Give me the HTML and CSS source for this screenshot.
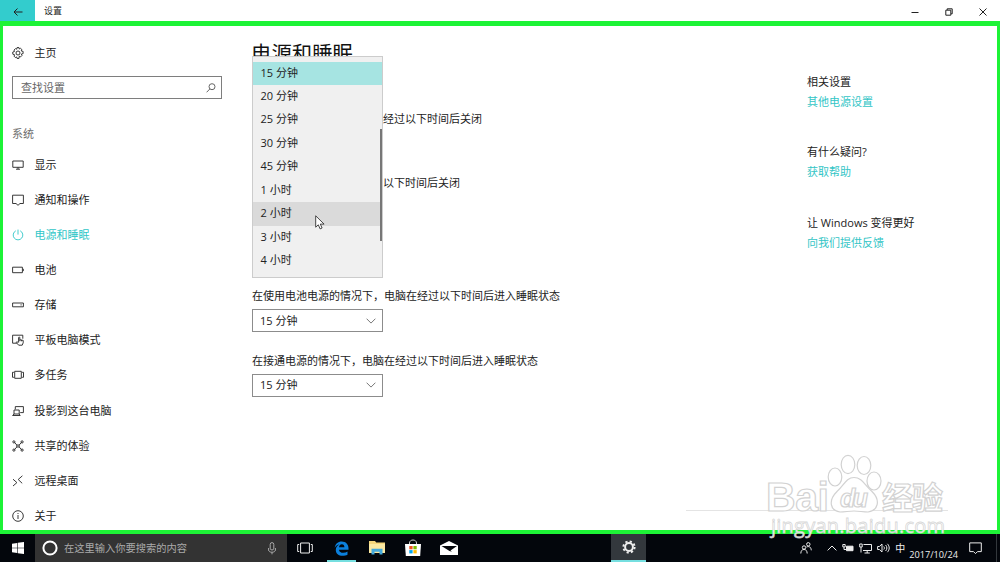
FILE: index.html
```html
<!DOCTYPE html>
<html lang="zh-CN">
<head>
    <meta charset="UTF-8">
    <meta name="viewport" content="width=device-width, initial-scale=1.0">
    <title>设置</title>
    <link rel="stylesheet" href="styles.css">
</head>
<body>
    <header class="titlebar">
        <div class="back">
            <svg width="10" height="10" viewBox="0 0 10 10"><path d="M9.5 5H1M4.5 1.5L1 5l3.500 3.500"/></svg>
        </div>
        <span class="window-name">设置</span>
        <div class="window-buttons">
            <svg width="8" height="8" viewBox="0 0 8 8"><path d="M.5 4.5h7"/></svg>
            <svg width="8" height="8" viewBox="0 0 8 8"><path d="M.8 2.2h5v5h-5zM2.2 2V.8h5v5H6"/></svg>
            <svg width="8" height="8" viewBox="0 0 8 8"><path d="M.5.5l7 7M7.5.5l-7 7"/></svg>
        </div>
    </header>

    <div class="window">
        <nav class="sidebar">
            <a class="home">
                <svg class="icon" viewBox="0 0 12 12"><path d="M5 .6h2l.3 1.4 1.2-.7 1.4 1.3-.7 1.3 1.9.5v2.200l-1.800.5.7 1.300-1.400 1.500-1.300-.7L7 11.400H5l-.4-1.500-1.200.7L2 9.100l.7-1.300L.8 7.200V5l1.800-.6L2 3.100l1.500-1.500 1.200.6z"/><circle cx="6" cy="6" r="2"/></svg>
                主页
            </a>
            <div class="search">
                <span>查找设置</span>
                <svg width="10" height="10" viewBox="0 0 10 10"><circle cx="6" cy="3.7" r="3"/><path d="M3.9 5.9L.6 9.3"/></svg>
            </div>
            <div class="group">系统</div>
            <ul class="menu">
                <li>
                    <svg class="icon" viewBox="0 0 12 12"><path d="M.8 2h10.4v6.3H.8zM6 8.3v1.8M4 10.2h4"/></svg>
                    显示
                </li>
                <li>
                    <svg class="icon" viewBox="0 0 12 12"><path d="M.6 1.2h10.8v8.3H8L6 11.3 4 9.5H.6z"/></svg>
                    通知和操作
                </li>
                <li class="active">
                    <svg class="icon" viewBox="0 0 12 12"><path d="M6 .6v5M3.8 1.8a4.8 4.8 0 1 0 4.4 0"/></svg>
                    电源和睡眠
                </li>
                <li>
                    <svg class="icon" viewBox="0 0 12 12"><path d="M.6 3.2h9.8v5.5H.6zM11.3 4.8v2.3"/></svg>
                    电池
                </li>
                <li>
                    <svg class="icon" viewBox="0 0 12 12"><path d="M.6 4h10.8v3.8H.6zM8.5 5.9h1.2"/></svg>
                    存储
                </li>
                <li>
                    <svg class="icon" viewBox="0 0 12 12"><path d="M4.8 9.2H.6V1.2h10.2v3.5M6 8.3l-1.3-.5-.4.8 2.4 2.6h3.5l1-2.4V6.4L7.8 5.7V3.6c0-.8-1.2-.8-1.2 0v5M7.8 5.7v1.5M9.4 6v1.3"/></svg>
                    平板电脑模式
                </li>
                <li>
                    <svg class="icon" viewBox="0 0 12 12"><path d="M2.7 2.3h6.6v7H2.7zM1.9 3.3H.5v5h1.4M10.1 3.3h1.4v5h-1.4"/></svg>
                    多任务
                </li>
                <li>
                    <svg class="icon" viewBox="0 0 12 12"><path d="M3.3 4.4V1.6h8.1v6H8.2M2 5h5.2v4H2zM2 9L.6 10.5h7.6L7.2 9"/></svg>
                    投影到这台电脑
                </li>
                <li>
                    <svg class="icon" viewBox="0 0 12 12"><path d="M2.5 2.4L4.8 5h2.4l2.3-2.6M2.5 9.6L4.8 7h2.4l2.3 2.6M4.8 5v2M7.2 5v2"/><circle cx="1.9" cy="1.9" r="1.1"/><circle cx="10.1" cy="1.9" r="1.1"/><circle cx="1.9" cy="10.1" r="1.1"/><circle cx="10.1" cy="10.1" r="1.1"/></svg>
                    共享的体验
                </li>
                <li>
                    <svg class="icon" viewBox="0 0 12 12"><path d="M1 4.2l3.9 3.4L1 11M10.4.8L6.2 4.5l4 3.8"/></svg>
                    远程桌面
                </li>
                <li>
                    <svg class="icon" viewBox="0 0 12 12"><circle cx="6" cy="6" r="5.3"/><path d="M6 5v4M6 3v1"/></svg>
                    关于
                </li>
            </ul>
        </nav>

        <main class="content">
            <h1>电源和睡眠</h1>
            <div class="screen-settings">
                <p>经过以下时间后关闭</p>
                <p>以下时间后关闭</p>
            </div>
            <div class="setting">
                <p>在使用电池电源的情况下，电脑在经过以下时间后进入睡眠状态</p>
                <div class="select">15 分钟
                    <svg width="10" height="6" viewBox="0 0 10 6"><path d="M.6.7L5 5.1 9.4.7"/></svg>
                </div>
            </div>
            <div class="setting">
                <p>在接通电源的情况下，电脑在经过以下时间后进入睡眠状态</p>
                <div class="select">15 分钟
                    <svg width="10" height="6" viewBox="0 0 10 6"><path d="M.6.7L5 5.1 9.4.7"/></svg>
                </div>
            </div>

            <!-- open list -->
            <ul class="dropdown">
                <li class="selected">15 分钟</li>
                <li>20 分钟</li>
                <li>25 分钟</li>
                <li>30 分钟</li>
                <li>45 分钟</li>
                <li>1 小时</li>
                <li class="hover">2 小时</li>
                <li>3 小时</li>
                <li>4 小时</li>
            </ul>
            <div class="scrollbar"></div>
            <svg class="cursor" width="10" height="15" viewBox="0 0 10 15"><path d="M.7.8v11.4l2.6-2.4 1.8 4.1 2-.9-1.8-3.9h3.8z"/></svg>
        </main>

        <aside class="related">
            <section>
                <h2>相关设置</h2>
                <a>其他电源设置</a>
            </section>
            <section>
                <h2>有什么疑问?</h2>
                <a>获取帮助</a>
            </section>
            <section>
                <h2>让 Windows 变得更好</h2>
                <a>向我们提供反馈</a>
            </section>
        </aside>
    </div>

    <footer class="taskbar">
        <div class="start">
            <svg width="12" height="12" viewBox="0 0 12 12"><path d="M0 1.7l5.2-.8v4.8H0zM5.8.8L12 0v5.7H5.8zM0 6.3h5.2v4.8L0 10.3zM5.8 6.3H12V12l-6.2-.8z"/></svg>
        </div>
        <div class="cortana">
            <svg width="16" height="16" viewBox="0 0 16 16"><circle cx="8" cy="8" r="6.6"/></svg>
            <span>在这里输入你要搜索的内容</span>
            <svg class="mic" width="8" height="13" viewBox="0 0 8 13"><rect x="2.2" y=".6" width="3.6" height="7.4" rx="1.8"/><path d="M.6 6v2c0 3 6.8 3 6.8 0V6M4 10.3v2"/></svg>
        </div>
        <div class="app">
            <svg width="16" height="12" viewBox="0 0 16 12" fill="none" stroke="#ddd"><path d="M3.6 1h8.8v10H3.6zM2.2 2.5H.7v7h1.5M13.8 2.5h1.5v7h-1.5"/></svg>
        </div>
        <div class="app open">
            <svg width="15" height="15" viewBox="0 0 15 15"><path d="M.7 6.7C1.2 2.7 4 .4 7.7.4c4.2 0 6.8 2.9 6.8 6.7v1.6H5c.2 2.2 2 3.1 4.2 3.1 1.6 0 3-.4 4.3-1.2v3.1c-1.4.8-3 1.1-4.9 1.1-4 0-6.800-2.200-6.800-5.900 0-2.300 1.300-4.300 3.500-5.300C3.500 3.800 1.700 4.900.7 6.700zM5 6.200h5.400c0-1.900-.9-2.900-2.500-2.900S5.300 4.300 5 6.200z" fill="#0b7fdc" fill-rule="evenodd"/></svg>
        </div>
        <div class="app">
            <svg width="16" height="14" viewBox="0 0 16 14"><path d="M0 0h6l1.200 1.500H16V12H0z" fill="#f5d67b"/><path d="M0 3h16v9H0z" fill="#fbe8a2"/><path d="M2.500 13.500V7.800h11v5.700h-3v-2.700h-5v2.700z" fill="#45a9dc"/></svg>
        </div>
        <div class="app">
            <svg width="18" height="18" viewBox="0 0 18 18"><path d="M5.500 5.500V4c0-4 7-4 7 0v1.500" fill="none" stroke="#ccc"/><path d="M1 5h16l-.8 12H1.800z" fill="#fff"/><path d="M5.300 7h3.300v3.300H5.300z" fill="#f15022"/><path d="M9.400 7h3.300v3.300H9.400z" fill="#7db900"/><path d="M5.300 11.100h3.300v3.300H5.300z" fill="#00a3ee"/><path d="M9.400 11.100h3.300v3.300H9.400z" fill="#feb800"/></svg>
        </div>
        <div class="app">
            <svg width="18" height="14" viewBox="0 0 18 14"><path d="M0 4.500L9 0l9 4.500V14H0z" fill="#fff"/><path d="M1.500 5H17l-6.500 4.500 1.500 1.300L9.500 10z" fill="#05070c"/></svg>
        </div>
        <div class="app settings">
            <svg width="14" height="14" viewBox="0 0 14 14" fill="none" stroke="#fff"><circle cx="7" cy="7" r="3.9" stroke-width="2"/><circle cx="7" cy="7" r="5.6" stroke-width="2" stroke-dasharray="2.2 2.198"/></svg>
        </div>
        <div class="tray">
            <svg class="people" width="12" height="12" viewBox="0 0 12 12"><circle cx="8.3" cy="2.3" r="1.7"/><circle cx="4" cy="5.5" r="1.7"/><path d="M.8 11.5C1 8.700 2 7.500 4 7.500s3 1.200 3.200 4M6.500 5c3-1.200 4.500.3 4.800 3.300"/></svg>
            <svg width="10" height="6" viewBox="0 0 10 6"><path d="M.6 5.400L5 1l4.400 4.400"/></svg>
            <svg width="12" height="10" viewBox="0 0 12 10"><path d="M.8 1.500h2.400v2.400H.8zM2 4v2.500h2"/><path class="solid" d="M4.500 3.200h6.500v4.500H4.500z"/></svg>
            <svg width="13" height="11" viewBox="0 0 13 11"><path d="M4.500 1.500h8v6H4M8.200 7.500V10M5.500 10h5.300M.7 1h2.500v3H.7zM2 4v5.500"/></svg>
            <svg width="13" height="10" viewBox="0 0 13 10"><path d="M.6 3.500h1.800L5 1v8L2.400 6.500H.6zM6.800 3.500c.8 1 .8 2 0 3M8.600 2c1.700 2 1.700 4 0 6M10.400.8c2.400 2.600 2.400 5.800 0 8.400"/></svg>
            <span class="ime">中</span>
            <span class="date">2017/10/24</span>
            <svg class="notice" width="13" height="13" viewBox="0 0 13 13"><path d="M.7.9h11.600v8.700H8.500l-2 2-2-2H.7z"/></svg>
        </div>
    </footer>

    <svg class="watermark" width="270" height="90" viewBox="0 0 270 90">
        <path class="shade" d="M0 60.500h262"/>
        <text class="logo" x="80" y="61" textLength="63">Bai</text>
        <g class="paw">
            <ellipse cx="149" cy="27" rx="6.800" ry="9"/>
            <ellipse cx="162" cy="14.500" rx="6.800" ry="9.200"/>
            <ellipse cx="178" cy="15.500" rx="6.800" ry="9"/>
            <ellipse cx="188" cy="31" rx="7" ry="9"/>
            <path d="M168 27.500c8 0 11 8 18 14 9 9 6 19-4 20.500-5 0-9-1-14-1s-9 1-14 1c-10-1.500-12-11.500-3-20.500 7-6 9-14 17-14z"/>
        </g>
        <text class="du" x="154" y="57" textLength="28">du</text>
        <text class="jingyan" x="196" y="59" textLength="61">经验</text>
        <text class="site" x="85" y="83" textLength="174">jingyan.baidu.com</text>
    </svg>
</body>
</html>
```
FILE: styles.css
```css
* {
    box-sizing: border-box;
}
body {
    position: relative;
    display: flex;
    flex-direction: column;
    width: 1000px;
    height: 562px;
    margin: 0;
    overflow: hidden;
    background: #fff;
    color: #222;
    font-family: "Open Sans", "Noto Sans CJK SC", sans-serif;
    font-size: 11px;
    line-height: 16px;
}
svg {
    flex: none;
    fill: none;
    stroke: currentColor;
}
h1, h2, p, ul {
    margin: 0;
    padding: 0;
    font-weight: normal;
}
ul {
    list-style: none;
}

/* title bar */
.titlebar {
    display: flex;
    flex: none;
    align-items: center;
    height: 21px;
    padding-top: 1px;
}
.back {
    display: flex;
    align-items: center;
    justify-content: center;
    width: 35px;
    height: 21px;
    margin-top: -1px;
    padding-top: 2px;
    background: #33cccd;
}
.window-name {
    padding-left: 9px;
    font-size: 9px;
}
.window-buttons {
    display: flex;
    gap: 26px;
    margin-left: auto;
    padding: 2px 13px 0 0;
}

/* settings window */
.window {
    display: flex;
    flex: none;
    height: 513px;
    border: solid #1df336;
    border-width: 5px 3px 4px;
}
.sidebar {
    width: 249px;
    padding: 18px 30px 0 9px;
}
.icon {
    width: 12px;
    height: 12px;
    margin-left: -0.5px;
    stroke-width: 0.9;
}
.home {
    display: flex;
    align-items: center;
    gap: 11px;
    height: 18px;
}
.search {
    display: flex;
    align-items: center;
    justify-content: space-between;
    height: 23px;
    margin-top: 14px;
    padding: 0 5px 0 8px;
    border: 1px solid #7e7e7e;
    color: #666;
}
.group {
    margin-top: 27px;
    color: #6d6d6d;
}
.menu {
    margin-top: 5px;
}
.menu li {
    display: flex;
    align-items: center;
    gap: 11px;
    height: 35.15px;
}
.menu .active {
    color: #2fc6c7;
}
.content {
    position: relative;
    width: 555px;
}
h1 {
    margin-left: -1px;
    padding-top: 12px;
    color: #111;
    font-size: 20.4px;
    line-height: 30px;
}
.screen-settings {
    display: grid;
    gap: 48px;
    padding: 43px 0 0 131px;
}
.screen-settings + .setting {
    margin-top: 97px;
}
.setting {
    margin-top: 20px;
}
.select {
    display: flex;
    align-items: center;
    justify-content: space-between;
    width: 131px;
    height: 23px;
    margin-top: 5px;
    padding: 0 6px 0 7px;
    border: 1px solid #8c8c8c;
}
.setting + .setting {
    margin-top: 20.5px;
}
.select svg {
    color: #777;
}
.dropdown {
    position: absolute;
    top: 30px;
    left: 0;
    width: 131px;
    height: 222px;
    padding-top: 4.5px;
    border: 1px solid #ccc;
    background: #f0f0f0;
}
.dropdown li {
    height: 23.45px;
    padding-left: 7.5px;
    line-height: 22px;
}
.dropdown .selected {
    background: #a6e4e2;
}
.dropdown .hover {
    background: #dadada;
}
.scrollbar {
    position: absolute;
    top: 103px;
    left: 128px;
    width: 1.5px;
    height: 112px;
    background: #777;
}
.cursor {
    position: absolute;
    top: 189px;
    left: 63px;
    color: #333;
    fill: #fff;
    stroke-width: 0.9;
}
.related {
    padding-top: 47px;
}
.related section {
    height: 70.3px;
}
.related h2 {
    font-size: 11px;
    line-height: 17px;
}
.related a {
    display: block;
    padding-top: 4px;
    color: #33c5c6;
}

/* taskbar */
.taskbar {
    display: flex;
    flex: none;
    height: 28px;
    background: #03060c;
    color: #eee;
}
.start {
    display: flex;
    align-items: center;
    justify-content: center;
    width: 35px;
}
.start svg {
    fill: #fff;
    stroke: none;
}
.cortana {
    display: flex;
    align-items: center;
    gap: 6px;
    width: 252px;
    padding: 0 11px 0 7px;
    background: #333;
    color: #aaa;
    font-size: 10.25px;
}
.cortana circle {
    stroke: #fff;
    stroke-width: 2;
}
.mic {
    margin-left: auto;
}
.app {
    display: flex;
    align-items: center;
    justify-content: center;
    width: 36px;
}
.app [fill]:not([stroke]) {
    stroke: none;
}
.open {
    background: linear-gradient(#76dfe0, #76dfe0) center bottom / 29px 2px no-repeat;
}
.settings {
    width: 35px;
    margin-left: 144px;
    background: #33383d;
    border-bottom: 2px solid #76dfe0;
}
.tray {
    display: flex;
    align-items: center;
    gap: 5px;
    margin-left: auto;
    padding-right: 14px;
    border-right: 1px solid #33383d;
    margin-right: 3px;
}
.people {
    margin-right: 10px;
}
.solid {
    fill: #eee;
}
.ime {
    margin-right: -1px;
    font-size: 10px;
}
.date {
    padding-top: 13px;
    font-size: 9.2px;
}
.notice {
    margin-left: 6px;
}

/* watermark over the lower right corner */
.watermark {
    position: absolute;
    top: 450px;
    left: 686px;
    fill: #fff;
    stroke: #d2d2d2;
    stroke-width: 1.2;
}
.shade {
    stroke: #e4e4e4;
}
.logo, .du {
    font-family: "Liberation Sans", sans-serif;
    font-weight: bold;
    font-size: 41px;
}
.du {
    font-size: 25px;
    font-style: italic;
}
.jingyan {
    font-family: "Noto Sans CJK SC", sans-serif;
    font-weight: bold;
    font-size: 31px;
}
.site {
    fill: rgba(255, 255, 255, 0.9);
    stroke: rgba(205, 205, 205, 0.8);
    stroke-width: 0.8;
    font-size: 20px;
}
```
